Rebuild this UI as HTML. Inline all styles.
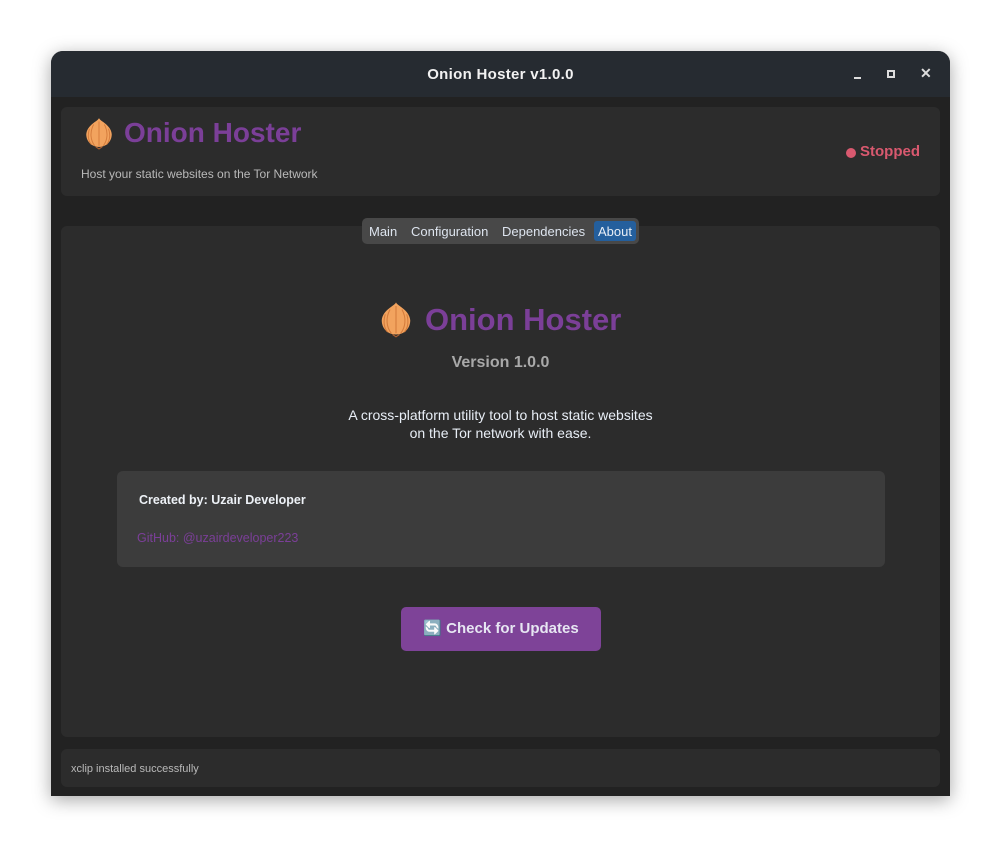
<!DOCTYPE html>
<html><head><meta charset="utf-8"><style>
*{margin:0;padding:0;box-sizing:border-box}
body{width:1002px;height:848px;background:#fff;font-family:"Liberation Sans",sans-serif;position:relative;overflow:hidden}
.win{position:absolute;left:51px;top:51px;width:899px;height:745px;background:#222;border-radius:12px 12px 0 0;overflow:hidden;box-shadow:0 4px 18px rgba(0,0,0,.35)}
.tb{position:absolute;left:0;top:0;width:899px;height:46px;background:#262b31}
.tt{position:absolute;left:0;right:0;top:15px;text-align:center;color:#f2f2f2;font-size:15px;font-weight:bold;letter-spacing:.3px}
.p{position:absolute;background:#2c2c2c;border-radius:6px}
.t{position:absolute;white-space:nowrap}
.tabs{position:absolute;left:311px;top:167px;width:277px;height:26px;background:#484848;border-radius:5px}
.tab{position:absolute;top:6px;font-size:13px;color:#dde4ee}
</style></head><body>
<div class="win">
 <div class="tb"><div class="tt">Onion Hoster v1.0.0</div>
  <div style="position:absolute;left:803px;top:26px;width:7px;height:2px;background:#ddd"></div>
  <div style="position:absolute;left:836px;top:19px;width:8px;height:8px;border:2px solid #ddd"></div>
  <div class="t" style="left:869px;top:14px;color:#ddd;font-size:14px;font-weight:bold">✕</div>
 </div>
 <div class="p" style="left:10px;top:56px;width:879px;height:89px">
  <svg class="t" style="left:21px;top:9px" width="34" height="34" viewBox="0 0 32 32"><path d="M16 2 C15 5 5 8 4 17 C4 24 9 29 16 29 C23 29 28 24 28 17 C27 8 17 5 16 2Z" fill="#f2a35e"/><path d="M16 5 L16 28 M11 8 C7 15 8 23 12 28 M21 8 C25 15 24 23 20 28 M7 12 C5 18 6 24 9 27 M25 12 C27 18 26 24 23 27" stroke="#d47c3c" stroke-width="0.9" fill="none"/><path d="M13 29 L16 31 L19 29" stroke="#b06030" fill="none"/></svg>
  <div class="t" style="left:63px;top:10px;font-size:28px;font-weight:bold;color:#7b3f98">Onion Hoster</div>
  <div class="t" style="left:20px;top:60px;font-size:12px;color:#b9b9b9">Host your static websites on the Tor Network</div>
  <div style="position:absolute;left:785px;top:41px;width:10px;height:10px;border-radius:50%;background:#d9596f"></div>
  <div class="t" style="left:799px;top:36px;font-size:15px;font-weight:bold;color:#d9596f">Stopped</div>
 </div>
 <div class="p" style="left:10px;top:175px;width:879px;height:511px"></div>
 <div class="tabs">
  <div class="tab" style="left:7px">Main</div>
  <div class="tab" style="left:49px">Configuration</div>
  <div class="tab" style="left:140px">Dependencies</div>
  <div style="position:absolute;left:232px;top:3px;width:42px;height:20px;background:#245f9d;border-radius:3px"></div>
  <div class="tab" style="left:236px;color:#e8eef6">About</div>
 </div>
 <svg class="t" style="left:326px;top:248px" width="38" height="40" viewBox="0 0 32 32"><path d="M16 2 C15 5 5 8 4 17 C4 24 9 29 16 29 C23 29 28 24 28 17 C27 8 17 5 16 2Z" fill="#f2a35e"/><path d="M16 5 L16 28 M11 8 C7 15 8 23 12 28 M21 8 C25 15 24 23 20 28 M7 12 C5 18 6 24 9 27 M25 12 C27 18 26 24 23 27" stroke="#d47c3c" stroke-width="0.9" fill="none"/><path d="M13 29 L16 31 L19 29" stroke="#b06030" fill="none"/></svg>
 <div class="t" style="left:374px;top:251px;font-size:31px;font-weight:bold;color:#7b3f98">Onion Hoster</div>
 <div class="t" style="left:0;width:899px;text-align:center;top:303px;font-size:16px;font-weight:bold;color:#a9a9a9">Version 1.0.0</div>
 <div class="t" style="left:0;width:899px;text-align:center;top:355px;font-size:14px;line-height:18px;color:#e8eef6">A cross-platform utility tool to host static websites<br>on the Tor network with ease.</div>
 <div style="position:absolute;left:66px;top:420px;width:768px;height:96px;background:#3c3c3c;border-radius:6px">
  <div class="t" style="left:22px;top:22px;font-size:12.5px;font-weight:bold;color:#eef2f7">Created by: Uzair Developer</div>
  <div class="t" style="left:20px;top:60px;font-size:12.5px;color:#7b3f98">GitHub: @uzairdeveloper223</div>
 </div>
 <div style="position:absolute;left:350px;top:556px;width:200px;height:44px;background:#7e4398;border-radius:5px;color:#e6e6f2;font-size:15px;font-weight:bold;text-align:center;line-height:44px">🔄 Check for Updates</div>
 <div class="p" style="left:10px;top:698px;width:879px;height:38px">
  <div class="t" style="left:10px;top:14px;font-size:11px;color:#b9b9b9">xclip installed successfully</div>
 </div>
</div>
</body></html>
